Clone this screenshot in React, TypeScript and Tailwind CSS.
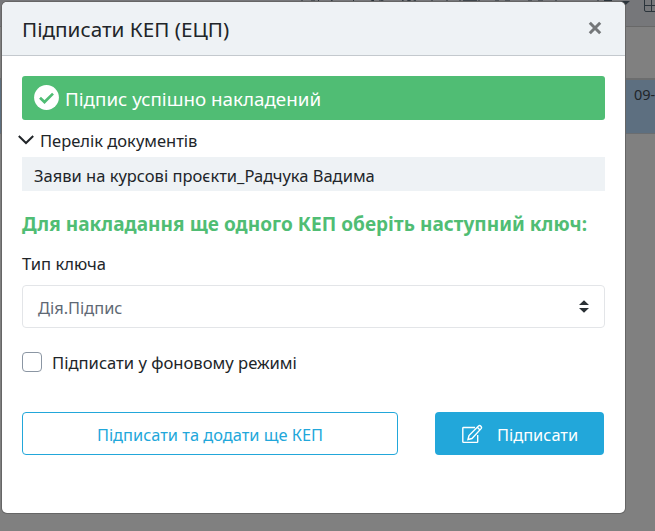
import type { ReactNode } from 'react';

function Check() {
  return (
    <svg className="h-[26px] w-[26px] shrink-0" viewBox="0 0 26 26">
      <circle cx="12.500" cy="12.500" r="12.400" fill="#fff" />
      <path d="M6 12.700 10.500 17 19 8.600" fill="none" stroke="#50bd74" strokeWidth="2.700" />
    </svg>
  );
}

function Toolbar() {
  return (
    <div className="h-[27px] border-b border-[#686868] bg-[#76777a]">
      <svg className="block h-[26px] w-full" viewBox="0 0 655 26" fill="none" stroke="#2b343b">
        <path d="M302 0v2M312 0v1M314 0v2M318 0l2 2M331 0l3 2M354 0l-2 2M371 0l3 1M374 0l-2 2M379 0h2l4 2M402 0l3 2M407 0l4 1M416 0l-4 2M432 1.500h15M432 0v2M447 0v2M460 0v2M463 .8h14M479 0v2M495 1h4M505 1h5M528 1h4M538 1h5M556 0v2M598 0v2M604 .5h8" />
        <path d="M620 1h10l-5 4.500z" fill="#2b343b" stroke="none" />
        <rect x="644.5" y="-2.5" width="16" height="14" rx="1.5" />
        <path d="M645 5.500h10M651.500 0v11" />
      </svg>
    </div>
  );
}

function Page({ children }: { children: ReactNode }) {
  return (
    <div className="relative h-[531px] w-[655px] overflow-hidden bg-[#808080] text-[#212529]" style={{ fontFamily: '"Noto Sans", "Open Sans", sans-serif' }}>
      <Toolbar />
      <div className="h-[51px]" />
      <div className="h-[56px] border-t-2 border-b border-t-[#6c6d6e] border-b-[#6a6d70] bg-[#5d6f80]">
        <span className="ml-[634px] block pt-[4px] text-[14.5px] leading-[20px] whitespace-nowrap">09-</span>
      </div>
      {children}
    </div>
  );
}

export default function App() {
  return (
    <Page>
      <section className="absolute top-[2px] left-[2px] flex h-[511px] w-[623px] flex-col overflow-hidden rounded-[5px] bg-white shadow-[0_0_0_1px_#666]">
        <header className="flex h-[54px] shrink-0 items-center justify-between border-b border-[#c4c9ce] bg-[#eef2f5] pr-[22px] pl-5">
          <h1 className="pt-[3px] text-[20.7px] whitespace-nowrap">Підписати КЕП (ЕЦП)</h1>
          <svg className="mb-px h-4 w-4" viewBox="0 0 16 16" stroke="#747779" strokeWidth="3"><path d="M2.800 2.800l10.400 10.400M13.200 2.800 2.800 13.200" /></svg>
        </header>
        <div className="flex flex-col px-5 pt-5">
          <div className="flex h-[44px] items-center rounded-[3px] bg-[#50bd74] pl-[12px] text-[18.8px] text-white">
            <Check />
            <span className="ml-[5px] pt-[3px] whitespace-nowrap">Підпис успішно накладений</span>
          </div>
          <div className="-ml-1 flex h-[37px] items-center pt-[3px] text-[16.5px]">
            <svg className="mr-[6px] mb-px h-4 w-4" viewBox="0 0 16 16" fill="none" stroke="#212529" strokeWidth="2"><path d="M.800 4 8 11l7.200-7" /></svg>
            <span className="pt-[2px] whitespace-nowrap">Перелік документів</span>
          </div>
          <div className="flex h-[34px] items-center bg-[#eef2f5] pt-[5px] pl-3 text-[16.5px]"><span className="whitespace-nowrap">Заяви на курсові проєкти_Радчука Вадима</span></div>
          <div className="mt-[20px] flex h-[26px] items-center text-[19px] font-bold text-[#50bd74]"><span className="whitespace-nowrap tracking-[0.04px]">Для накладання ще одного КЕП оберіть наступний ключ:</span></div>
          <div className="mt-[15px] flex h-6 items-center text-[16.6px]"><span className="whitespace-nowrap">Тип ключа</span></div>
          <div className="mt-[9px] flex h-[43px] items-center justify-between rounded-[4px] border border-[#e3e5e8] pr-[15px] pl-[15px] text-[16.4px] text-[#5f6975]">
            <span className="pt-[3px] whitespace-nowrap">Дія.Підпис</span>
            <svg className="mb-px h-[13px] w-[10px]" viewBox="0 0 10 13" fill="#2b3136"><path d="M0 5 5 .3 10 5zM0 8l5 4.700L10 8z" /></svg>
          </div>
          <div className="mt-[24px] flex h-5 items-center text-[16.6px]">
            <i className="mr-[10px] h-5 w-5 rounded-[4px] border border-[#8b96a3]" />
            <span className="pt-[3px] whitespace-nowrap">Підписати у фоновому режимі</span>
          </div>
          <div className="mt-[40px] flex h-[43px] justify-between pr-px text-[16.4px]">
            <button className="flex w-[376px] items-center justify-center rounded-[4px] border border-[#22a7da] text-[#22a7da]"><span className="pt-[3px] whitespace-nowrap">Підписати та додати ще КЕП</span></button>
            <button className="flex w-[169px] items-center rounded-[4px] bg-[#22a7da] pl-[26px] text-white">
              <svg className="mr-[14px] h-[22px] w-[22px]" viewBox="0 0 22 22" fill="none" stroke="#fff" strokeWidth="1.400"><path d="M14 4.500H2.500q-.700 0-.700.700v13.500q0 .700.700.700h13.500q.700 0 .700-.700V12M7 16.500l1-4L17.500 3q1.200-1 2.400.200t.200 2.400L11 15.500zM16.300 4.200l2.700 2.700" /></svg>
              <span className="pt-[3px] whitespace-nowrap">Підписати</span>
            </button>
          </div>
        </div>
      </section>
    </Page>
  );
}
